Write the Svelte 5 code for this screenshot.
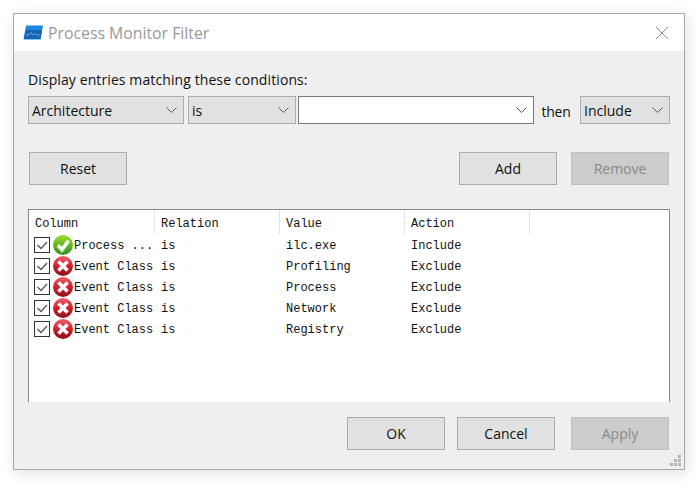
<script>
  let columns = ["Column", "Relation", "Value", "Action"];

  let rows = [
    { ok: true, column: "Process ...", relation: "is", value: "ilc.exe", action: "Include" },
    { ok: false, column: "Event Class", relation: "is", value: "Profiling", action: "Exclude" },
    { ok: false, column: "Event Class", relation: "is", value: "Process", action: "Exclude" },
    { ok: false, column: "Event Class", relation: "is", value: "Network", action: "Exclude" },
    { ok: false, column: "Event Class", relation: "is", value: "Registry", action: "Exclude" }
  ];
</script>

<div class="page">
  <svg class="defs" width="0" height="0">
    <defs>
      <linearGradient id="green" x1="0" y1="0" x2="0" y2="1">
        <stop offset="0" stop-color="#a4d82c" />
        <stop offset="0.55" stop-color="#5cb51e" />
        <stop offset="1" stop-color="#2c8a1c" />
      </linearGradient>
      <linearGradient id="red" x1="0" y1="0" x2="0" y2="1">
        <stop offset="0" stop-color="#f0606a" />
        <stop offset="0.5" stop-color="#d0202e" />
        <stop offset="1" stop-color="#8e0f1a" />
      </linearGradient>
    </defs>
  </svg>

  <div class="window">
    <header class="titlebar">
      <svg class="logo" width="20" height="15" viewBox="0 0 20 15">
        <path d="M3 0.5H20L17.5 14.5H0.5Z" fill="#1e88e0" />
        <path d="M2.5 5H19L17.5 14H1Z" fill="#1565b4" />
        <path d="M3 10L6 10L8 7.5L10 10.5L12 8L14 10H17" fill="none" stroke="#6aa6dc" stroke-width="1" />
      </svg>
      <span class="title">Process Monitor Filter</span>
      <svg class="close" width="14" height="14" viewBox="0 0 14 14">
        <path d="M1 1L13 13M13 1L1 13" stroke="#8a8a8a" stroke-width="1" fill="none" />
      </svg>
    </header>

    <div class="body">
      <div class="prompt">Display entries matching these conditions:</div>

      <div class="conditions">
        <div class="combo architecture">
          <span>Architecture</span>
          <svg width="11" height="6" viewBox="0 0 11 6"><path d="M0.5 0.5L5.5 5.5L10.5 0.5" /></svg>
        </div>
        <div class="combo relation">
          <span>is</span>
          <svg width="11" height="6" viewBox="0 0 11 6"><path d="M0.5 0.5L5.5 5.5L10.5 0.5" /></svg>
        </div>
        <div class="combo value">
          <span></span>
          <svg width="11" height="6" viewBox="0 0 11 6"><path d="M0.5 0.5L5.5 5.5L10.5 0.5" /></svg>
        </div>
        <span class="then">then</span>
        <div class="combo action">
          <span>Include</span>
          <svg width="11" height="6" viewBox="0 0 11 6"><path d="M0.5 0.5L5.5 5.5L10.5 0.5" /></svg>
        </div>
      </div>

      <div class="actions">
        <button>Reset</button>
        <div class="right">
          <button>Add</button>
          <button disabled>Remove</button>
        </div>
      </div>

      <div class="list">
        <div class="list-head">
          {#each columns as col}
            <div class="head-cell">{col}</div>
          {/each}
        </div>
        {#each rows as row}
          <div class="row">
            <div class="cell first">
              <span class="check">
                <svg width="14" height="14" viewBox="0 0 14 14"><path d="M2.5 7L6 10.5L12 4" /></svg>
              </span>
              {#if row.ok}
                <svg class="status" width="20" height="20" viewBox="0 0 20 20">
                  <circle cx="10" cy="10" r="10" fill="url(#green)" />
                  <path d="M5 10L9 14.5L15.5 5.5" fill="none" stroke="#b9d8a6" stroke-width="3.6" transform="translate(0 1)" />
                  <path d="M5 10L9 14L15.5 5.5" fill="none" stroke="#fff" stroke-width="3" />
                </svg>
              {:else}
                <svg class="status" width="20" height="20" viewBox="0 0 20 20">
                  <circle cx="10" cy="10" r="10" fill="url(#red)" />
                  <path d="M5.5 5.5L14.5 14.5M14.5 5.5L5.5 14.5" fill="none" stroke="#fff" stroke-width="3.6" />
                </svg>
              {/if}
              <span>{row.column}</span>
            </div>
            <div class="cell">{row.relation}</div>
            <div class="cell">{row.value}</div>
            <div class="cell">{row.action}</div>
          </div>
        {/each}
      </div>

      <div class="footer">
        <button>OK</button>
        <button>Cancel</button>
        <button class="apply" disabled>Apply</button>
      </div>

      <div class="grip">
        {#each Array(6) as _}
          <i></i>
        {/each}
      </div>
    </div>
  </div>
</div>

<style>
  :global(body) {
    background: #fff;
  }

  .page {
    width: 698px;
    height: 483px;
    padding: 13px;
    box-sizing: border-box;
    font-family: "Open Sans", "Noto Sans", sans-serif;
    font-size: 14px;
    color: #111;
  }

  .defs {
    display: block;
  }

  .window {
    width: 672px;
    height: 457px;
    box-sizing: border-box;
    border: 1px solid #a8a8a8;
    box-shadow: 2px 3px 14px rgba(0, 0, 0, 0.12);
    display: flex;
    flex-direction: column;
  }

  .titlebar {
    height: 37px;
    background: #fff;
    display: flex;
    align-items: center;
    padding: 0 15px 0 9px;
    flex: none;
  }

  .logo {
    margin-right: 5px;
  }

  .title {
    font-size: 15.8px;
    color: #999;
  }

  .close {
    margin-left: auto;
  }

  .body {
    position: relative;
    flex: 1;
    background: #efefef;
    padding: 17px 14px 0 14px;
    display: flex;
    flex-direction: column;
  }

  .prompt {
    height: 28px;
    line-height: 23px;
    letter-spacing: 0.1px;
  }

  .conditions {
    display: flex;
    align-items: center;
    height: 28px;
  }

  .combo {
    height: 28px;
    box-sizing: border-box;
    border: 1px solid #adadad;
    background: #e1e1e1;
    display: flex;
    align-items: center;
    justify-content: space-between;
    padding: 0 4px 0 3px;
    flex: none;
  }

  .combo svg {
    fill: none;
    stroke: #555;
    stroke-width: 1;
    margin-right: 2px;
  }

  .architecture {
    width: 156px;
    margin-right: 4px;
  }

  .relation {
    width: 108px;
    margin-right: 2px;
  }

  .value {
    width: 236px;
    background: #fff;
    border-color: #7a7a7a;
  }

  .then {
    width: 46px;
    box-sizing: border-box;
    padding: 2px 2px 0 0;
    text-align: center;
    letter-spacing: -0.2px;
  }

  .action {
    width: 90px;
  }

  .actions {
    display: flex;
    justify-content: space-between;
    margin-top: 28px;
    padding: 0 1px;
  }

  .right {
    display: flex;
    gap: 14px;
  }

  button {
    width: 98px;
    height: 33px;
    box-sizing: border-box;
    border: 1px solid #adadad;
    background: #e1e1e1;
    font-family: inherit;
    font-size: 14px;
    color: #111;
    padding: 0;
  }

  button:disabled {
    background: #cccccc;
    border-color: #bfbfbf;
    color: #8a8a8a;
  }

  .list {
    margin-top: 24px;
    height: 193px;
    box-sizing: border-box;
    background: #fff;
    border: 1px solid #828790;
    border-bottom: none;
    font-family: "Liberation Mono", monospace;
    font-size: 12px;
    color: #111;
  }

  .list-head {
    display: flex;
    height: 25px;
  }

  .head-cell {
    width: 125px;
    height: 24px;
    box-sizing: border-box;
    padding: 7px 0 0 6px;
    border-right: 1px solid #e5e5e5;
    line-height: 14px;
  }

  .head-cell:first-child {
    width: 126px;
  }

  .row {
    display: flex;
    height: 21px;
    align-items: center;
  }

  .cell {
    width: 125px;
    padding-left: 6px;
    box-sizing: border-box;
    white-space: pre;
  }

  .first {
    width: 126px;
    padding-left: 5px;
    display: flex;
    align-items: center;
  }

  .check {
    width: 16px;
    height: 16px;
    box-sizing: border-box;
    border: 1px solid #333;
    background: #fff;
    display: flex;
    align-items: center;
    justify-content: center;
    flex: none;
    margin-top: -1px;
  }

  .check svg {
    fill: none;
    stroke: #555;
    stroke-width: 1.3;
  }

  .status {
    margin: -1px 1px 0 3px;
    flex: none;
  }

  .footer {
    margin-top: auto;
    margin-bottom: 19px;
    display: flex;
    justify-content: flex-end;
    padding-right: 1px;
    gap: 12px;
  }

  .apply {
    margin-left: 4px;
  }

  .grip {
    position: absolute;
    right: 3px;
    bottom: 3px;
    width: 11px;
    height: 11px;
    display: grid;
    grid-template-columns: repeat(3, 3px);
    grid-template-rows: repeat(3, 3px);
    gap: 1px;
    direction: rtl;
  }

  .grip i {
    background: #b5b5b5;
  }

  .grip i:nth-child(1) {
    grid-area: 1 / 1;
  }

  .grip i:nth-child(2) {
    grid-area: 2 / 1;
  }

  .grip i:nth-child(3) {
    grid-area: 2 / 2;
  }

  .grip i:nth-child(4) {
    grid-area: 3 / 1;
  }

  .grip i:nth-child(5) {
    grid-area: 3 / 2;
  }

  .grip i:nth-child(6) {
    grid-area: 3 / 3;
  }
</style>
